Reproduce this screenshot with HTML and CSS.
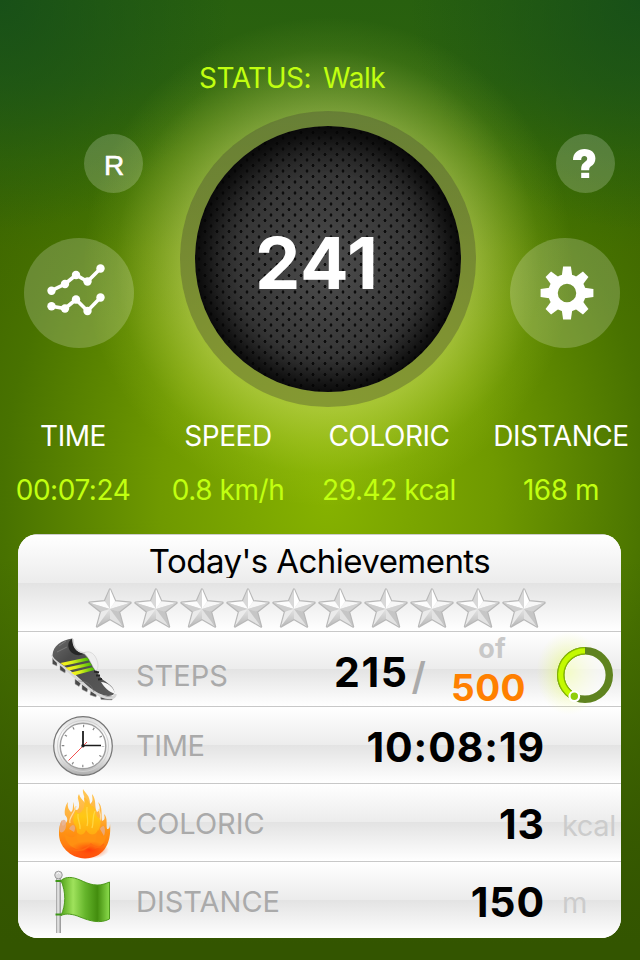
FILE: index.html
```html
<!DOCTYPE html>
<html lang="en">
<head>
    <meta charset="UTF-8">
    <title>Pedometer</title>
    <link rel="stylesheet" href="styles.css">
</head>
<body>
    <svg class="defs" width="0" height="0">
        <defs>
            <linearGradient id="starDark" x1="0" y1="0" x2="0" y2="1">
                <stop offset="0" stop-color="#e4e4e4"/>
                <stop offset="1" stop-color="#b8b8b8"/>
            </linearGradient>
            <symbol id="star" viewBox="0 0 44 42">
                <path d="M22 2.5 L27.2 14.2 L42.5 15.8 L31 24.8 L35 39.5 L22 32 L9 39.5 L13 24.8 L1.5 15.8 L16.8 14.2 Z" fill="#dedede" stroke="#b8b8b8" stroke-width="2.4" stroke-linejoin="round"/>
                <path d="M22 2 L22 22 L16.8 14.2 Z" fill="#d8d8d8"/>
                <path d="M22 2 L27.2 14.2 L22 22 Z" fill="#fff"/>
                <path d="M22 22 L1.5 15.8 L16.8 14.2 Z" fill="#fcfcfc"/>
                <path d="M22 22 L1.5 15.8 L13 24.8 Z" fill="#cecece"/>
                <path d="M22 22 L27.2 14.2 L42.5 15.8 Z" fill="#f7f7f7"/>
                <path d="M22 22 L42.5 15.8 L31 24.8 Z" fill="#d2d2d2"/>
                <path d="M22 22 L13 24.8 L9 39.5 Z" fill="#ebebeb"/>
                <path d="M22 22 L9 39.5 L22 32 Z" fill="url(#starDark)"/>
                <path d="M22 22 L22 32 L35 39.5 Z" fill="#e3e3e3"/>
                <path d="M22 22 L31 24.8 L35 39.5 Z" fill="#c6c6c6"/>
            </symbol>
        </defs>
    </svg>

    <div class="status">
        <span class="status-label">STATUS:</span>
        <span class="status-value">Walk</span>
    </div>

    <div class="hero">
        <div class="side side-left">
            <button class="round small btn-r">R</button>
            <button class="round large">
                <svg width="110" height="110" viewBox="0 0 110 110" fill="none" stroke="#fff" stroke-width="3.6">
                    <path d="M27.5 52.7 L41 46 L52 37 L63.5 43.5 L76.5 30.5"/>
                    <path d="M27.5 68.3 L41 70.5 L52 61.5 L63.5 73 L76.5 59.5"/>
                    <g fill="#fff" stroke="none">
                        <circle cx="27.5" cy="52.7" r="4.2"/><circle cx="41" cy="46" r="4.2"/><circle cx="52" cy="37" r="4.2"/><circle cx="63.5" cy="43.5" r="4.2"/><circle cx="76.5" cy="30.5" r="4.2"/>
                        <circle cx="27.5" cy="68.3" r="4.2"/><circle cx="41" cy="70.5" r="4.2"/><circle cx="52" cy="61.5" r="4.2"/><circle cx="63.5" cy="73" r="4.2"/><circle cx="76.5" cy="59.5" r="4.2"/>
                    </g>
                </svg>
            </button>
        </div>

        <div class="dial">
            <div class="dial-face"><span class="count">241</span></div>
        </div>

        <div class="side side-right">
            <button class="round small">
                <svg width="59" height="59" viewBox="0 0 59 59">
                    <path d="M17 26 C17 19 22 15 28.5 15 C35 15 39.4 18.8 39.4 24.4 C39.4 28.2 37.6 30.4 35 32.3 C33.6 33.3 33.2 34 33.2 36.2 L25.2 36.2 C25.2 32.2 25.8 30.6 28 28.8 C30 27.2 31.2 26.4 31.2 24.6 C31.2 23 30 22 28.5 22 C26.4 22 25.2 23.6 25.2 26 Z" fill="#fff"/>
                    <rect x="25.2" y="38.8" width="8" height="5.2" fill="#fff"/>
                </svg>
            </button>
            <button class="round large">
                <svg width="110" height="110" viewBox="0 0 110 110">
                    <g transform="translate(57 55)">
                        <g fill="#fff">
                            <path id="tooth" d="M-5.4 -16 L-3.9 -26.4 L3.9 -26.4 L5.4 -16 Z"/>
                            <use href="#tooth" transform="rotate(45)"/>
                            <use href="#tooth" transform="rotate(90)"/>
                            <use href="#tooth" transform="rotate(135)"/>
                            <use href="#tooth" transform="rotate(180)"/>
                            <use href="#tooth" transform="rotate(225)"/>
                            <use href="#tooth" transform="rotate(270)"/>
                            <use href="#tooth" transform="rotate(315)"/>
                        </g>
                        <circle r="14" fill="none" stroke="#fff" stroke-width="9.5"/>
                    </g>
                </svg>
            </button>
        </div>
    </div>

    <div class="metrics">
        <div class="metric"><div class="name">TIME</div><div class="num">00:07:24</div></div>
        <div class="metric"><div class="name">SPEED</div><div class="num">0.8 km/h</div></div>
        <div class="metric"><div class="name">COLORIC</div><div class="num">29.42 kcal</div></div>
        <div class="metric"><div class="name">DISTANCE</div><div class="num">168 m</div></div>
    </div>

    <div class="panel">
        <div class="panel-head">
            <div class="title">Today's Achievements</div>
            <div class="stars">
                <svg><use href="#star"/></svg>
                <svg><use href="#star"/></svg>
                <svg><use href="#star"/></svg>
                <svg><use href="#star"/></svg>
                <svg><use href="#star"/></svg>
                <svg><use href="#star"/></svg>
                <svg><use href="#star"/></svg>
                <svg><use href="#star"/></svg>
                <svg><use href="#star"/></svg>
                <svg><use href="#star"/></svg>
            </div>
        </div>

        <div class="row row-steps">
            <!-- shoe -->
            <svg class="icon" width="118" height="74" viewBox="18 632 118 74">
                <defs>
                    <linearGradient id="stripe" x1="0" x2="1">
                        <stop offset="0" stop-color="#fff21c"/>
                        <stop offset=".4" stop-color="#d8f01c"/>
                        <stop offset="1" stop-color="#43b800"/>
                    </linearGradient>
                    <linearGradient id="shoe" x1="0" y1="0" x2="1" y2="1">
                        <stop offset="0" stop-color="#6c6c6c"/>
                        <stop offset=".3" stop-color="#4b4b4b"/>
                        <stop offset="1" stop-color="#5a5a5a"/>
                    </linearGradient>
                </defs>
                <g fill="#4a4a4a" stroke="#aaa" stroke-width=".5">
                    <path d="M52.5 658 L57 661 L57 666 L52.5 664 Z"/>
                    <path d="M60 665 L66 668 L65 673 L60 670 Z"/>
                    <path d="M75 679 L81 683 L79 686.5 L75 684 Z"/>
                    <path d="M82 684 L88 688 L87 692 L82 689.5 Z"/>
                    <path d="M91 690 L97 693 L96 697 L90 695 Z"/>
                    <path d="M100 695 L113 697 L112 700 L101 699.5 Z"/>
                </g>
                <path d="M52.5 655 C53 659 58 662 64 667 C75 677 88 690 101 696 C108 699 115 699 115.5 694" fill="none" stroke="#d6d6d6" stroke-width="2.6"/>
                <path d="M52.5 655 C53 646 61 640 72.5 638.5 C73 645 75 652 82 654 L86 652 C92 656 95 662 96 669 C99 680 107 681 112 687 C116 692 115 696 108 696 C95 695 84 682 72 672 C63 664 53 660 52.5 655 Z" fill="url(#shoe)"/>
                <path d="M72 638.7 C72 646 76 652 84 653.5 C79 657 72 655 69 649 C67.5 644 68.5 641 72 638.7 Z" fill="#262626"/>
                <path d="M73 639 C73 647 77 652 84 653" fill="none" stroke="#d4d4d4" stroke-width="1.3"/>
                <path d="M57 652 L67 647 M59 646 L66 641" fill="none" stroke="#868686" stroke-width=".7"/>
                <path d="M83.5 653 C89 650 94 653 96.5 659 C98.5 664 98.5 668 96 671 C92 667 90 658 83.5 653 Z" fill="#efefef" stroke="#ccc" stroke-width=".6"/>
                <path d="M94 671.5 L99 672.5 M96 675.5 L100 675.5 M98 679.5 L102 679" stroke="#262626" stroke-width="1.8"/>
                <path d="M101 682 C107 682 114 687 115 694 C109 692 104 687 101 682 Z" fill="#f7f7f7"/>
                <path d="M78 681 C85 681 91 683 94 692" fill="none" stroke="#777" stroke-width=".6"/>
                <g fill="url(#stripe)">
                    <path d="M60.5 663 L87 657.5 L89.5 660.3 L64 665.7 Z"/>
                    <path d="M65.5 667.8 L90 662.5 L92 665.3 L69 670.6 Z"/>
                    <path d="M71 672.5 L92.5 667.2 L94.5 670 L75 675.3 Z"/>
                </g>
            </svg>
            <div class="label">STEPS</div>
            <div class="steps">
                <span class="value">215</span><span class="slash">/</span>
            </div>
            <div class="goal">
                <div class="of">of</div>
                <div class="target">500</div>
            </div>
            <svg class="ring" width="100" height="100" viewBox="-50 -50 100 100">
                <defs>
                    <radialGradient id="glow">
                        <stop offset="0" stop-color="#e0ff30" stop-opacity=".6"/>
                        <stop offset=".5" stop-color="#e8ff60" stop-opacity=".28"/>
                        <stop offset="1" stop-color="#f0ff90" stop-opacity="0"/>
                    </radialGradient>
                </defs>
                <ellipse cx="-16" cy="-2" rx="33" ry="42" fill="url(#glow)"/>
                <circle r="20.5" fill="#fff" fill-opacity=".6"/>
                <circle r="24.3" fill="none" stroke="#5f831f" stroke-width="7.4"/>
                <path d="M0 -24.3 A24.3 24.3 0 0 0 -10.7 21.8" fill="none" stroke="#86b800" stroke-width="7.4"/>
                <path d="M0 -24.3 A24.3 24.3 0 0 0 -10.7 21.8" fill="none" stroke="#c3fa00" stroke-width="5"/>
                <circle cx="-10.7" cy="21.3" r="4.8" fill="#8fce0b" stroke="#fff" stroke-width="2.2"/>
            </svg>
        </div>

        <div class="row row-time">
            <!-- clock -->
            <svg class="icon" width="118" height="76" viewBox="18 707 118 76">
                <defs>
                    <linearGradient id="rim" x1="0" y1="0" x2="0" y2="1">
                        <stop offset="0" stop-color="#dcdcdc"/>
                        <stop offset=".3" stop-color="#fafafa"/>
                        <stop offset=".7" stop-color="#e8e8e8"/>
                        <stop offset="1" stop-color="#adadad"/>
                    </linearGradient>
                </defs>
                <circle cx="83" cy="746" r="29.3" fill="url(#rim)" stroke="#757575" stroke-width="1.2"/>
                <circle cx="83" cy="746" r="25.5" fill="none" stroke="#d0d0d0" stroke-width="1"/>
                <circle cx="83" cy="746" r="22.8" fill="#fff" stroke="#a0a0a0" stroke-width="1.4"/>
                <circle cx="83" cy="746" r="20" fill="none" stroke="#888" stroke-width="2.6" stroke-dasharray="1.2 9.272" stroke-dashoffset=".6"/>
                <path d="M83 746 V731" stroke="#1c1c1c" stroke-width="1.8"/>
                <path d="M83 745.5 H101" stroke="#1c1c1c" stroke-width="1.4"/>
                <path d="M87 742 L68.5 760.5" stroke="#f25050" stroke-width="1"/>
                <circle cx="83" cy="745.7" r="1.7" fill="#1c1c1c"/>
            </svg>
            <div class="label">TIME</div>
            <div class="value">10:08:19</div>
        </div>

        <div class="row row-kcal">
            <!-- flame -->
            <svg class="icon" width="118" height="77" viewBox="18 784 118 77">
                <defs>
                    <linearGradient id="fire" x1="0" y1="0" x2="0" y2="1">
                        <stop offset="0" stop-color="#ffca58"/>
                        <stop offset=".4" stop-color="#ffb03c"/>
                        <stop offset=".6" stop-color="#ff9414"/>
                        <stop offset=".8" stop-color="#ff8010"/>
                        <stop offset="1" stop-color="#ff4a0c"/>
                    </linearGradient>
                    <linearGradient id="fireIn" x1="0" y1="0" x2="0" y2="1">
                        <stop offset="0" stop-color="#ffb938"/>
                        <stop offset=".4" stop-color="#ffc814"/>
                        <stop offset="1" stop-color="#ff9a10"/>
                    </linearGradient>
                    <radialGradient id="ember">
                        <stop offset="0" stop-color="#ff3a08"/>
                        <stop offset="1" stop-color="#ff5a08" stop-opacity="0"/>
                    </radialGradient>
                </defs>
                <path d="M85 858.5 C70 858 58.5 846 59 833 C59 827 60 824 62 820 C61 826 63 827 65 824 C68 821 68 818 65 815 C64 810 66 804 68 802 C67 807 69 810 71 812 C74 810 72 806 74 802 C73 811 78 812 79 807 C80 800 76 799 79 794 C80 798 83 800 85 803 C86 798 82 794 83 789 C85 793 90 795 90 804 C94 801 92 798 92 794 C97 800 94 807 97 812 C101 810 100 807 98 802 C103 806 101 815 102 821 C105 820 105 818 104 814 C108 818 106 824 107 829 C109 829 110 828 110 823 C112 846 102 858 85 858.5 Z" fill="url(#fire)"/>
                <path d="M60 832 C58 819 66 817 66 823 C67 829 63 834 60 832 Z M69 829 C73 821 77 827 74 832 Z M100 829 C105 821 106 831 104 836 Z" fill="#e8ac86" opacity=".85"/>
                <path d="M70 823 C68 818 75 813 76 806 M99 822 C103 816 99 812 99 809" fill="none" stroke="#ffdc9c" stroke-width="1.2"/>
                <path d="M85 845 C72 843 80 832 75 825 C71 820 75 814 76 810 C78 816 82 813 84 807 C85 803 84 800 84 797 C89 800 90 807 93 806 C97 810 95 817 99 818 C104 825 96 831 96 839 C94 844 90 846 85 845 Z" fill="url(#fireIn)"/>
                <path d="M64 833 C71 840 76 838 76 831 C80 837 84 835 86 830 C90 836 95 836 98 830 C101 838 104 838 107 832 C106 847 95 851 83 851 C72 849 65 843 64 833 Z" fill="#ff9112" opacity=".9"/>
                <path d="M78 814 C77 820 81 824 80 829 M87 807 C86 815 89 820 87 826 M95 811 C92 817 94 822 92 828" fill="none" stroke="#ffdc50" stroke-width="1.3" opacity=".8"/>
                <ellipse cx="89" cy="850" rx="20" ry="9" fill="url(#ember)"/>
                <path d="M70 848 C77 853 86 850 91 844 C96 849 101 848 104 844" fill="none" stroke="#ff6c10" stroke-width="1.4"/>
            </svg>
            <div class="label">COLORIC</div>
            <div class="value">13</div>
            <div class="unit">kcal</div>
        </div>

        <div class="row row-dist">
            <!-- flag -->
            <svg class="icon" width="118" height="76" viewBox="18 862 118 76">
                <defs>
                    <linearGradient id="flag" x1="0" x2="1">
                        <stop offset="0" stop-color="#55a51c"/>
                        <stop offset=".25" stop-color="#9fe25c"/>
                        <stop offset=".5" stop-color="#65b52b"/>
                        <stop offset=".75" stop-color="#438d0e"/>
                        <stop offset="1" stop-color="#8bdc4c"/>
                    </linearGradient>
                    <linearGradient id="pole" x1="0" x2="1">
                        <stop offset="0" stop-color="#969696"/>
                        <stop offset=".4" stop-color="#eee"/>
                        <stop offset="1" stop-color="#8e8e8e"/>
                    </linearGradient>
                </defs>
                <rect x="56" y="878" width="5" height="55" fill="url(#pole)"/>
                <circle cx="58.5" cy="875" r="3.8" fill="#d9d9d9" stroke="#8a8a8a" stroke-width=".8"/>
                <path d="M56.5 874 Q58.5 871 60.5 874" stroke="#fff" fill="none"/>
                <path d="M55.5 881 H61.5 M55.5 914.5 H61.5" stroke="#3f9718" stroke-width="2"/>
                <path d="M61 880.5 C66 876 73 877 80 880 C89 884 97 888 109.5 882 L109.5 919 C100 924 90 921 80 917 C73 914 66 913 61 915.5 C66 905 66 892 61 880.5 Z" fill="url(#flag)" stroke="#4d991c" stroke-width="1"/>
            </svg>
            <div class="label">DISTANCE</div>
            <div class="value">150</div>
            <div class="unit">m</div>
        </div>
    </div>
</body>
</html>
```
FILE: styles.css
```css
* {
    box-sizing: border-box;
}
body {
    margin: 0;
    width: 640px;
    height: 960px;
    overflow: hidden;
    font-family: Inter, "Liberation Sans", sans-serif;
    font-size: 28px;
    background:
        radial-gradient(circle at 328px 262px, rgba(240, 250, 135, 0.38) 0, rgba(240, 250, 135, 0.38) 148px, rgba(235, 250, 110, 0.23) 180px, rgba(220, 250, 80, 0.08) 212px, transparent 245px),
        radial-gradient(circle at 0 0, rgba(20, 76, 26, 0.8) 0, transparent 230px),
        radial-gradient(circle at 640px 0, rgba(20, 76, 26, 0.8) 0, transparent 230px),
        linear-gradient(#28600f 0, rgba(42, 98, 15, 0.9) 80px, rgba(50, 105, 8, 0.6) 160px, rgba(60, 110, 0, 0.15) 250px, transparent 320px),
        linear-gradient(transparent 560px, #335500 945px),
        radial-gradient(ellipse 560px 700px at 328px 500px, #86b200 0, #6f9900 30%, #487200 58%, #335500 92%);
}
.defs {
    position: absolute;
}
.status {
    display: flex;
    gap: 12px;
    height: 111px;
    padding: 61px 0 0 199px;
    color: #c1ff10;
    letter-spacing: -0.5px;
    line-height: 34px;
}
.hero {
    display: flex;
    height: 296px;
}
.side {
    display: flex;
    flex-direction: column;
    gap: 45px;
    padding-top: 23px;
}
.side-left {
    width: 180px;
    padding-left: 24px;
}
.side-left .small {
    margin-left: 60px;
}
.side-right {
    width: 164px;
    padding-left: 34px;
}
.side-right .small {
    margin-left: 46px;
}
.round {
    display: flex;
    align-items: center;
    justify-content: center;
    padding: 0;
    border: none;
    border-radius: 50%;
    color: #fff;
    background: rgba(255, 255, 255, 0.2);
}
.small {
    width: 59px;
    height: 59px;
}
.large {
    width: 110px;
    height: 110px;
}
.btn-r {
    padding: 5px 0 0 1px;
    font: 500 28px "Liberation Sans", sans-serif;
    -webkit-text-stroke: 0.6px #fff;
}
.dial {
    width: 296px;
    height: 296px;
    padding: 15px;
    border-radius: 50%;
    background: rgba(70, 70, 50, 0.35);
}
.dial-face {
    display: flex;
    align-items: center;
    justify-content: center;
    width: 266px;
    height: 266px;
    border-radius: 50%;
    box-shadow: inset 0 0 32px 5px #000;
    background:
        radial-gradient(circle, #0c0c0c 1.1px, transparent 1.8px) 4px 1px / 12px 11px,
        radial-gradient(circle, #0c0c0c 1.1px, transparent 1.8px) 10px 6.5px / 12px 11px,
        radial-gradient(circle at 133px 140px, #4c4c4c 0, #363636 90px, #1c1c1c 133px);
}
.count {
    margin: 7px 22px 0 0;
    color: #fff;
    font-size: 72px;
    font-weight: 700;
    line-height: 1;
    letter-spacing: 1px;
}
.metrics {
    display: grid;
    grid-template-columns: 146px 164px 158px 186px;
    width: 654px;
    height: 127px;
    padding-top: 12px;
    letter-spacing: -0.45px;
    text-align: center;
    white-space: nowrap;
}
.name {
    color: #fff;
    line-height: 34px;
}
.num {
    margin-top: 20px;
    color: #c1ff10;
    line-height: 34px;
}
.panel {
    width: 603px;
    height: 404px;
    margin-left: 18px;
    border-radius: 20px;
    overflow: hidden;
    background: #fff;
}
.panel-head,
.row {
    background: linear-gradient(#fff, #ececec 50%, #e3e3e3 50%, #fff);
    border-bottom: 1px solid #c8c8c8;
}
.panel-head {
    height: 98px;
    border-top: 1px solid #ccc;
}
.title {
    height: 43px;
    padding-top: 6px;
    overflow: hidden;
    color: #000;
    font-size: 33px;
    line-height: 40px;
    letter-spacing: -0.55px;
    text-align: center;
}
.stars {
    display: flex;
    gap: 2px;
    padding: 9px 0 0 70px;
}
.stars svg {
    width: 44px;
    height: 42px;
}
.row {
    display: grid;
    grid-template-columns: 118px 160px 249px 76px;
    align-items: center;
    height: 78px;
}
.row-steps {
    position: relative;
    grid-template-columns: 118px 160px 130px 1fr;
    grid-template-rows: 74px;
    height: 75px;
}
.row-time {
    height: 77px;
}
.row-dist {
    height: 76px;
    border-bottom: none;
}
.label {
    padding-top: 2px;
    color: #aaa;
    font-size: 29px;
}
.row-steps .label {
    padding-top: 13px;
}
.row-time .label {
    padding-top: 0;
    letter-spacing: -0.4px;
}
.value {
    padding-top: 3px;
    color: #000;
    font-size: 41px;
    font-weight: 700;
    letter-spacing: 0.9px;
    text-align: right;
}
.steps {
    display: flex;
    justify-content: flex-end;
    gap: 3px;
    padding-top: 8px;
}
.steps .value {
    padding: 0;
    letter-spacing: 1.6px;
}
.slash {
    padding-top: 6px;
    color: #aaa;
    font-size: 38px;
    font-weight: 600;
}
.goal {
    width: 74px;
    margin-left: 25px;
    padding-top: 7px;
    font-weight: 700;
    text-align: center;
}
.of {
    padding-left: 8px;
    color: #c8c8c8;
    font-size: 27px;
    line-height: 30px;
}
.target {
    color: #ff8000;
    font-size: 37px;
    line-height: 48px;
    letter-spacing: 0.5px;
}
/* the glow spills over the neighbouring rows */
.ring {
    position: absolute;
    left: 517px;
    top: -7px;
}
.unit {
    padding: 5px 0 0 17px;
    color: #ccc;
    font-size: 29px;
    letter-spacing: -0.4px;
}
```
